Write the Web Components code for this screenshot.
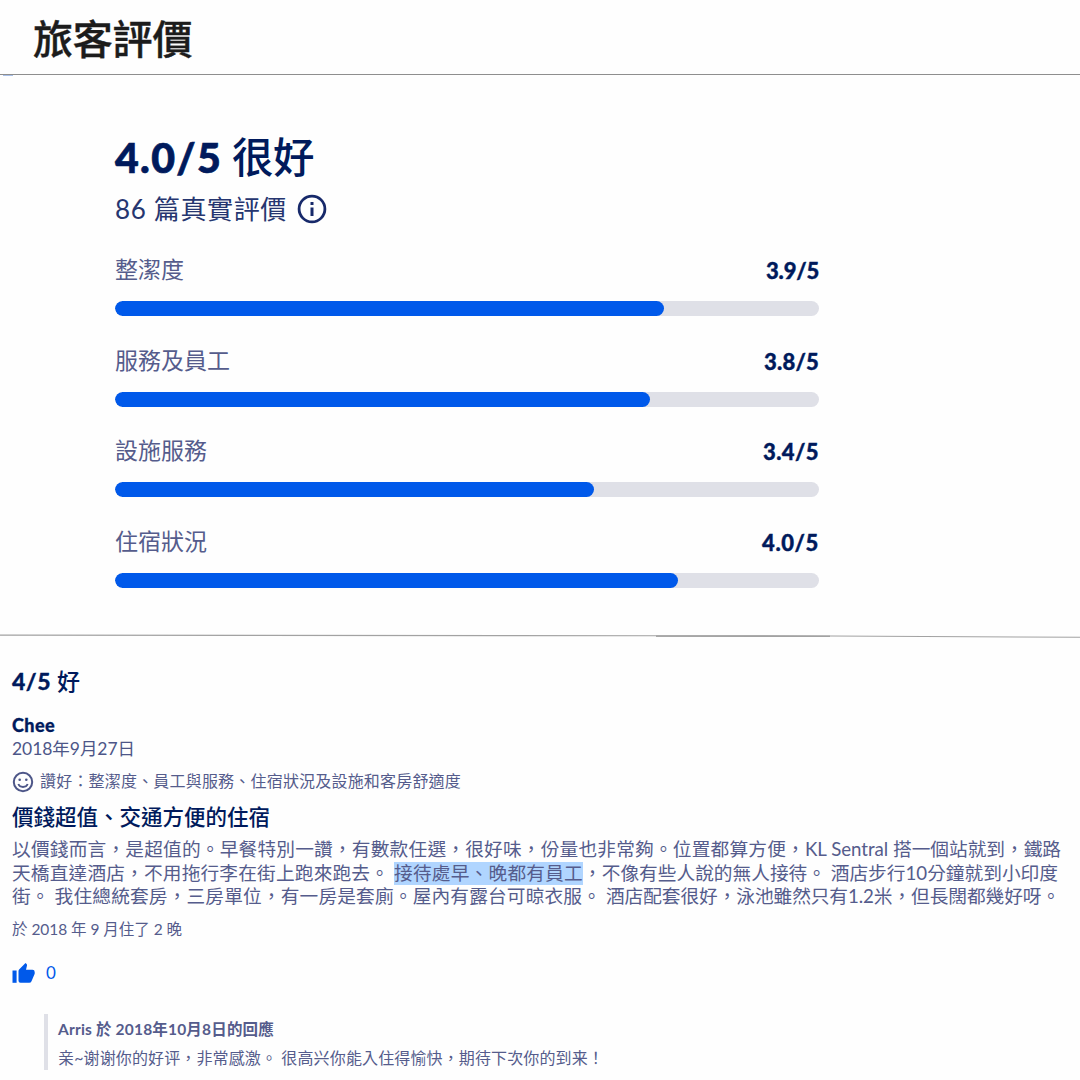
<!DOCTYPE html>
<html lang="zh-Hant">
<head>
<meta charset="utf-8">
<title>旅客評價</title>
<style>
  html, body { margin: 0; padding: 0; }
  body {
    width: 1080px;
    height: 1080px;
    overflow: hidden;
    background: #fefefe;
    font-family: Lato, "Noto Sans CJK TC", sans-serif;
    --ink: #001a5c;
    --muted: #555c8c;
    --blue: #0059ea;
    --track: #dfe0e7;
  }
  .line { display: flex; }
</style>
</head>
<body>
<review-page>
  <page-header slot="header">旅客評價</page-header>

  <score-summary slot="summary">
    <fit-text slot="score" width="107">4.0/5</fit-text>
    <fit-text slot="verdict" width="82">很好</fit-text>
    <fit-text slot="count" width="172">86 篇真實評價</fit-text>
    <score-bar label="整潔度" score="3.9" label-width="69" score-width="53"></score-bar>
    <score-bar label="服務及員工" score="3.8" label-width="115" score-width="55"></score-bar>
    <score-bar label="設施服務" score="3.4" label-width="92" score-width="56"></score-bar>
    <score-bar label="住宿狀況" score="4.0" label-width="92" score-width="57"></score-bar>
  </score-summary>

  <guest-review slot="review">
    <fit-text slot="rating" width="39">4/5</fit-text>
    <fit-text slot="verdict" width="23">好</fit-text>
    <fit-text slot="author" width="43">Chee</fit-text>
    <fit-text slot="date" width="123">2018年9月27日</fit-text>
    <fit-text slot="liked" width="421">讚好：整潔度、員工與服務、住宿狀況及設施和客房舒適度</fit-text>
    <fit-text slot="title" width="258">價錢超值、交通方便的住宿</fit-text>
    <div slot="body" class="line">
      <fit-text width="793">以價錢而言，是超值的。早餐特別一讚，有數款任選，很好味，份量也非常夠。位置都算方便，</fit-text>
      <fit-text width="256">KL Sentral 搭一個站就到，鐵路</fit-text>
    </div>
    <div slot="body" class="line">
      <fit-text width="382">天橋直達酒店，不用拖行李在街上跑來跑去。&nbsp;</fit-text>
      <fit-text width="189" marked>接待處早、晚都有員工</fit-text>
      <fit-text width="475">，不像有些人說的無人接待。 酒店步行10分鐘就到小印度</fit-text>
    </div>
    <div slot="body" class="line">
      <fit-text width="594">街。 我住總統套房，三房單位，有一房是套廁。屋內有露台可晾衣服。&nbsp;</fit-text>
      <fit-text width="454">酒店配套很好，泳池雖然只有1.2米，但長闊都幾好呀。</fit-text>
    </div>
    <fit-text slot="stay" width="170">於 2018 年 9 月住了 2 晚</fit-text>
    <like-count slot="likes" value="0"></like-count>
    <host-reply slot="reply">
      <fit-text slot="heading" width="216">Arris 於 2018年10月8日的回應</fit-text>
      <fit-text slot="text" width="546">亲~谢谢你的好评，非常感激。 很高兴你能入住得愉快，期待下次你的到来！</fit-text>
    </host-reply>
  </guest-review>
</review-page>

<script>
const define = (tag, Component) => {
  if (window.customElements.get(tag) === undefined) {
    window.customElements.define(tag, Component);
  }
};

class Base extends HTMLElement {
  constructor() {
    super();
    this.dom = this.attachShadow({ mode: "open" });
    const template = document.createElement("template");
    template.innerHTML = this.markup();
    this.dom.appendChild(document.importNode(template.content, true));
  }

  markup() {
    return "<slot></slot>";
  }
}

class ReviewPage extends Base {
  markup() {
    return `
      <style>
        :host { display: flex; flex-direction: column; width: 1080px; height: 1080px; }
        svg { display: block; flex: none; }
      </style>
      <slot name="header"></slot>
      <slot name="summary"></slot>
      <svg width="1080" height="4" viewBox="0 0 1080 4" fill="none">
        <path d="M0 1.1L656 1.8L830 2L1080 3.3" stroke="#a2a2a2" stroke-width="1.1"/>
        <path d="M656 2.2H830" stroke="#8d8d8d"/>
      </svg>
      <slot name="review"></slot>
    `;
  }
}

class PageHeader extends Base {
  markup() {
    return `
      <style>
        :host {
          display: block;
          box-sizing: border-box;
          height: 76px;
          padding: 7px 0 0 33px;
          background:
            linear-gradient(#8e8e8e, #8e8e8e) 0 74px / 100% 1px no-repeat,
            linear-gradient(#a9c0e8, #a9c0e8) 3px 75px / 10px 1px no-repeat;
          color: #1c1c1c;
          font: 500 40px/60px "Noto Sans CJK TC", sans-serif;
          letter-spacing: -0.2px;
          -webkit-text-stroke: 0.4px currentColor;
        }
      </style>
      <slot></slot>
    `;
  }
}

// Single line of text, tracked so that it fills the given width
class FitText extends Base {
  markup() {
    return `
      <style>
        :host { display: block; flex: none; }
        :host([marked]) span { background: #b0d5ff; }
        span { display: block; width: max-content; white-space: nowrap; }
      </style>
      <span><slot></slot></span>
    `;
  }

  connectedCallback() {
    requestAnimationFrame(() => this.fit());
  }

  fit() {
    const width = Number(this.getAttribute("width"));
    const span = this.dom.querySelector("span");
    const count = [...this.textContent].length;
    const natural = span.getBoundingClientRect().width;
    span.style.letterSpacing = `${(width - natural) / count}px`;
    this.style.width = `${width}px`;
  }
}

class ScoreSummary extends Base {
  markup() {
    return `
      <style>
        :host {
          display: flex;
          flex-direction: column;
          box-sizing: border-box;
          height: 558px;
          width: 819px;
          padding: 51px 0 0 115px;
          color: var(--ink);
        }
        .score {
          display: flex;
          align-items: baseline;
          gap: 10px;
          height: 60px;
          line-height: 60px;
        }
        .score slot[name="score"] { font-size: 41px; font-weight: 900; -webkit-text-stroke: 0.7px currentColor; }
        .score slot[name="verdict"] { font-size: 41.5px; font-weight: 500; }
        .count {
          display: flex;
          align-items: center;
          gap: 10px;
          height: 40px;
          margin-top: 2px;
          font-size: 26px;
          line-height: 38px;
          color: #263670;
        }
        .bars { display: grid; grid-auto-rows: 90.7px; margin-top: 22px; }
      </style>
      <div class="score"><slot name="score"></slot><slot name="verdict"></slot></div>
      <div class="count">
        <slot name="count"></slot>
        <svg width="30" height="30" viewBox="0 0 30 30" fill="none">
          <circle cx="15" cy="15" r="12.9" stroke="#17296a" stroke-width="2.8"/>
          <path d="M15 13.6V22M15 8V11" stroke="#17296a" stroke-width="3"/>
        </svg>
      </div>
      <div class="bars"><slot></slot></div>
    `;
  }
}

class ScoreBar extends Base {
  markup() {
    return `
      <style>
        :host { display: block; }
        .row {
          display: flex;
          justify-content: space-between;
          height: 38px;
          line-height: 38px;
          margin-bottom: 12px;
        }
        .label { font-size: 23px; line-height: 37px; color: var(--muted); }
        .value {
          font-size: 22px;
          font-weight: 900;
          line-height: 39px;
          color: var(--ink);
          -webkit-text-stroke: 0.4px currentColor;
        }
        .track { height: 15px; border-radius: 8px; background: var(--track); overflow: hidden; }
        .fill { height: 100%; border-radius: 8px; background: var(--blue); }
      </style>
      <div class="row">
        <fit-text class="label"></fit-text>
        <fit-text class="value"></fit-text>
      </div>
      <div class="track"><div class="fill"></div></div>
    `;
  }

  connectedCallback() {
    const label = this.dom.querySelector(".label");
    const value = this.dom.querySelector(".value");
    const score = this.getAttribute("score");
    label.textContent = this.getAttribute("label");
    label.setAttribute("width", this.getAttribute("label-width"));
    value.textContent = `${score}/5`;
    value.setAttribute("width", this.getAttribute("score-width"));
    this.dom.querySelector(".fill").style.width = `${(score / 5) * 100}%`;
  }
}

class GuestReview extends Base {
  markup() {
    return `
      <style>
        :host { display: block; padding: 23px 0 0 12px; color: var(--muted); }
        .rating {
          display: flex;
          align-items: baseline;
          gap: 6px;
          height: 40px;
          line-height: 40px;
          font-size: 23px;
          color: var(--ink);
        }
        .rating slot[name="rating"] { font-weight: 900; -webkit-text-stroke: 0.3px currentColor; }
        .rating slot[name="verdict"] { font-weight: 500; }
        .author {
          margin-top: 12px;
          font-size: 18px;
          font-weight: 900;
          line-height: 24px;
          height: 24px;
          color: var(--ink);
          -webkit-text-stroke: 0.3px currentColor;
        }
        .date { font-size: 17.5px; line-height: 24px; height: 24px; color: #4d5688; }
        .liked { display: flex; align-items: center; gap: 6px; height: 32px; margin-top: 4px; font-size: 16px; line-height: 32px; }
        .liked svg { margin-top: 2px; }
        .title { font-size: 21.5px; font-weight: 500; line-height: 36px; height: 36px; margin-top: 2px; color: var(--ink); }
        .body { font-size: 18.7px; line-height: 23.7px; height: 72px; margin-top: 3px; }
        .stay { font-size: 15.5px; line-height: 24px; height: 24px; margin-top: 7px; }
        .likes { margin-top: 20px; }
        .reply { margin-top: 29px; }
      </style>
      <div class="rating"><slot name="rating"></slot><slot name="verdict"></slot></div>
      <div class="author"><slot name="author"></slot></div>
      <div class="date"><slot name="date"></slot></div>
      <div class="liked">
        <svg width="22" height="22" viewBox="0 0 22 22" fill="none" stroke="#4d5688">
          <circle cx="11" cy="11" r="9.2" stroke-width="2"/>
          <path d="M6.3 13C7.8 17 14.2 17 15.7 13" stroke-width="1.8"/>
          <circle cx="7.7" cy="8.7" r="1.3" fill="#4d5688" stroke="none"/>
          <circle cx="14.3" cy="8.7" r="1.3" fill="#4d5688" stroke="none"/>
        </svg>
        <slot name="liked"></slot>
      </div>
      <div class="title"><slot name="title"></slot></div>
      <div class="body"><slot name="body"></slot></div>
      <div class="stay"><slot name="stay"></slot></div>
      <div class="likes"><slot name="likes"></slot></div>
      <div class="reply"><slot name="reply"></slot></div>
    `;
  }
}

class LikeCount extends Base {
  markup() {
    return `
      <style>
        :host { display: flex; align-items: center; gap: 11px; height: 24px; color: var(--blue); font-size: 17px; line-height: 24px; }
      </style>
      <svg width="23" height="22" viewBox="0 0 23 22" fill="currentColor">
        <path d="M0.5 8.5H4.6V20.8H0.5Z"/>
        <path d="M6.5 9.2Q6.5 8.3 7.1 7.6L13.5 1L14.6 2Q15.2 2.6 15 3.4L14 7.8H20.5Q22.7 7.8 22.7 10V11.8L19.5 19.3Q18.9 20.8 17.2 20.8H8.5Q6.5 20.8 6.5 18.8Z"/>
      </svg>
      <span></span>
    `;
  }

  connectedCallback() {
    this.dom.querySelector("span").textContent = this.getAttribute("value");
  }
}

class HostReply extends Base {
  markup() {
    return `
      <style>
        :host {
          display: block;
          box-sizing: border-box;
          height: 56px;
          margin-left: 32px;
          padding-left: 10px;
          border-left: 4px solid var(--track);
          color: var(--muted);
        }
        .heading { font-size: 15.5px; font-weight: 700; line-height: 30px; height: 30px; }
        .text { font-size: 16px; line-height: 28px; height: 26px; }
      </style>
      <div class="heading"><slot name="heading"></slot></div>
      <div class="text"><slot name="text"></slot></div>
    `;
  }
}

define("fit-text", FitText);
define("score-bar", ScoreBar);
define("score-summary", ScoreSummary);
define("like-count", LikeCount);
define("host-reply", HostReply);
define("guest-review", GuestReview);
define("page-header", PageHeader);
define("review-page", ReviewPage);
</script>
</body>
</html>
